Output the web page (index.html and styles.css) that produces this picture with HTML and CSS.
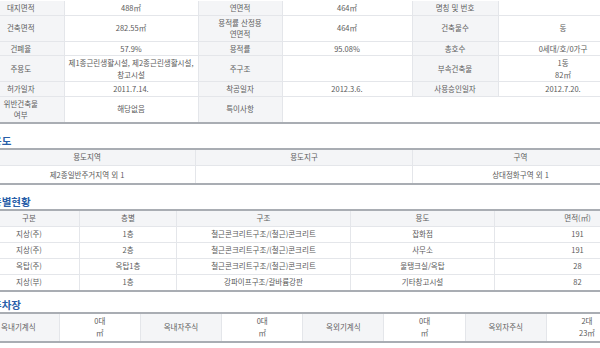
FILE: index.html
```html
<!DOCTYPE html>
<html lang="ko">
<head>
<meta charset="utf-8">
<title>건축물대장</title>
<link rel="stylesheet" href="styles.css">
</head>
<body>
<div class="page">
  <table class="tbl info main">
    <colgroup>
      <col class="c86"><col class="c134"><col class="c84"><col class="c130"><col class="c86"><col class="c130">
    </colgroup>
    <tr>
      <th>대지면적</th><td>488㎡</td><th>연면적</th><td>464㎡</td><th>명칭 및 번호</th><td></td>
    </tr>
    <tr>
      <th>건축면적</th><td>282.55㎡</td><th>용적률 산정용<br>연면적</th><td>464㎡</td><th>건축물수</th><td>동</td>
    </tr>
    <tr>
      <th>건폐율</th><td>57.9%</td><th>용적률</th><td>95.08%</td><th>총호수</th><td>0세대/호/0가구</td>
    </tr>
    <tr>
      <th>주용도</th><td>제1종근린생활시설, 제2종근린생활시설,<br>창고시설</td><th>주구조</th><td></td><th>부속건축물</th><td>1동<br>82㎡</td>
    </tr>
    <tr>
      <th>허가일자</th><td>2011.7.14.</td><th>착공일자</th><td>2012.3.6.</td><th>사용승인일자</th><td>2012.7.20.</td>
    </tr>
    <tr>
      <th>위반건축물<br>여부</th><td>해당없음</td><th>특이사항</th><td colspan="3"></td>
    </tr>
  </table>

  <h2 class="sec">용도</h2>
  <table class="tbl grid">
    <colgroup><col class="c217"><col class="c217"><col class="c216"></colgroup>
    <tr class="head"><th>용도지역</th><th>용도지구</th><th>구역</th></tr>
    <tr class="tall"><td>제2종일반주거지역 외 1</td><td></td><td>상대정화구역 외 1</td></tr>
  </table>

  <h2 class="sec">층별현황</h2>
  <table class="tbl grid floors">
    <colgroup><col class="c101"><col class="c97"><col class="c174"><col class="c144"><col class="c134"></colgroup>
    <tr class="head"><th>구분</th><th>층별</th><th>구조</th><th>용도</th><th class="area">면적(㎡)</th></tr>
    <tr><td>지상(주)</td><td>1층</td><td>철근콘크리트구조/(철근)콘크리트</td><td>잡화점</td><td class="area">191</td></tr>
    <tr><td>지상(주)</td><td>2층</td><td>철근콘크리트구조/(철근)콘크리트</td><td>사무소</td><td class="area">191</td></tr>
    <tr><td>옥탑(주)</td><td>옥탑1층</td><td>철근콘크리트구조/(철근)콘크리트</td><td>물탱크실/옥탑</td><td class="area">28</td></tr>
    <tr><td>지상(부)</td><td>1층</td><td>강파이프구조/갈바륨강판</td><td>기타창고시설</td><td class="area">82</td></tr>
  </table>

  <h2 class="sec sec-tight">주차장</h2>
  <table class="tbl info parking">
    <tr>
      <th>옥내기계식</th><td>0대<br>㎡</td>
      <th>옥내자주식</th><td>0대<br>㎡</td>
      <th>옥외기계식</th><td>0대<br>㎡</td>
      <th>옥외자주식</th><td>2대<br>23㎡</td>
    </tr>
  </table>
</div>
</body>
</html>
```

FILE: styles.css
```css
html, body {
  margin: 0;
  padding: 0;
  background: #ffffff;
}

body {
  width: 600px;
  height: 348px;
  overflow: hidden;
  font-family: "Noto Sans CJK KR", "Noto Sans", sans-serif;
  color: #5a5a5a;
}

.page {
  width: 650px;
  margin-left: -22px;
}

.tbl {
  width: 650px;
  border-collapse: collapse;
  table-layout: fixed;
  font-size: 7.5px;
  line-height: 10px;
  text-align: center;
  border-bottom: 2px solid #a9adb3;
}

.tbl th,
.tbl td {
  font-weight: normal;
  padding: 2px 2px 2.2px;
  border: 1px solid #e4e6ea;
  vertical-align: middle;
}

.tbl th {
  background: #f4f5f7;
  color: #5d5d5d;
}

.tbl td {
  background: #ffffff;
}

.info th { border-left: none; }
.info tr:first-child th,
.info tr:first-child td { border-top: none; }

.main {
  margin-top: 1px;
  line-height: 11.5px;
}

.main th,
.main td {
  padding-top: 1px;
  padding-bottom: 1px;
}

.grid,
.parking {
  border-top: 2px solid #a9adb3;
}

.grid .head th {
  background: #f4f5f7;
  padding-top: 2.5px;
  padding-bottom: 2.5px;
}

.grid tr.tall td {
  padding-top: 4px;
  padding-bottom: 3px;
}

.floors {
  line-height: 10px;
}

.floors td,
.floors th,
.floors .head th {
  padding-top: 2.5px;
  padding-bottom: 2.5px;
}

.floors .area {
  padding-left: 34px;
}

.parking {
  line-height: 12.5px;
}

.parking th,
.parking td {
  padding: 1px 2px;
}

.c86 { width: 86px; }
.c134 { width: 134px; }
.c84 { width: 84px; }
.c130 { width: 130px; }
.c217 { width: 217px; }
.c216 { width: 216px; }
.c101 { width: 101px; }
.c97 { width: 97px; }
.c174 { width: 174px; }
.c144 { width: 144px; }

.sec {
  margin: 11px 0 1px;
  padding-left: 14px;
  font-size: 10.5px;
  line-height: 12px;
  font-weight: bold;
  color: #2a5fa9;
}

.sec-tight {
  margin-top: 7px;
}
```
